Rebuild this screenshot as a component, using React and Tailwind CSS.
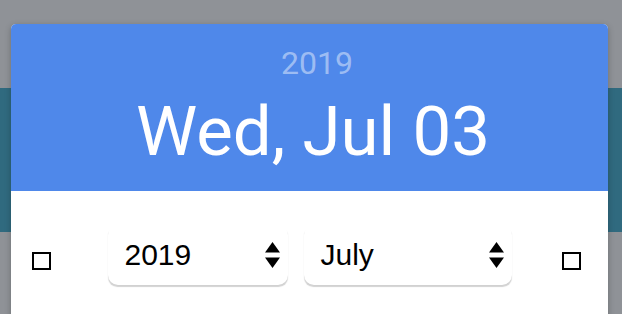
function UpDown() {
  return (
    <svg width="15" height="26" viewBox="0 0 15 26" className="shrink-0">
      <path d="M7.5 0 L15 10.5 L0 10.5 Z" fill="#000" />
      <path d="M0 15.5 L15 15.5 L7.5 26 Z" fill="#000" />
    </svg>
  );
}

function Select({ label, width }) {
  return (
    <div
      className={`flex h-[60px] items-center justify-between rounded-[10px] bg-white pl-[17px] pr-[8px] shadow-[0_2px_1px_-0.5px_rgba(0,0,0,0.18)] ${width}`}
    >
      <span className="font-['Liberation_Sans',Arial,sans-serif] text-[30px] leading-none text-black">
        {label}
      </span>
      <UpDown />
    </div>
  );
}

export default function App() {
  return (
    <div className="relative h-[314px] w-[622px] overflow-hidden bg-[#8f9297]">
      <div className="h-[88px]" />
      <div className="h-[144px] bg-[#306a7f]" />

      <div className="absolute left-[11px] top-[24px] w-[597px] overflow-hidden rounded-[5px] bg-white shadow-[0_2px_6px_rgba(0,0,0,0.25)]">
        <div className="flex h-[167px] flex-col items-center bg-[#4f88ea] font-['Roboto',sans-serif]">
          <p className="ml-[15px] mt-[23px] text-[32px] leading-none text-white/45">2019</p>
          <p className="ml-[7px] mt-[18px] text-[69px] leading-none text-white">Wed, Jul 03</p>
        </div>

        <div className="flex h-[130px] items-start justify-between pl-[21px] pr-[27px] pt-[34px]">
          <div className="mt-[27px] h-[18px] w-[19px] border-[2.5px] border-black" />
          <div className="ml-[6px] flex gap-[16px]">
            <Select label="2019" width="w-[180px]" />
            <Select label="July" width="w-[208px]" />
          </div>
          <div className="mt-[27px] h-[18px] w-[19px] border-[2.5px] border-black" />
        </div>
      </div>
    </div>
  );
}
